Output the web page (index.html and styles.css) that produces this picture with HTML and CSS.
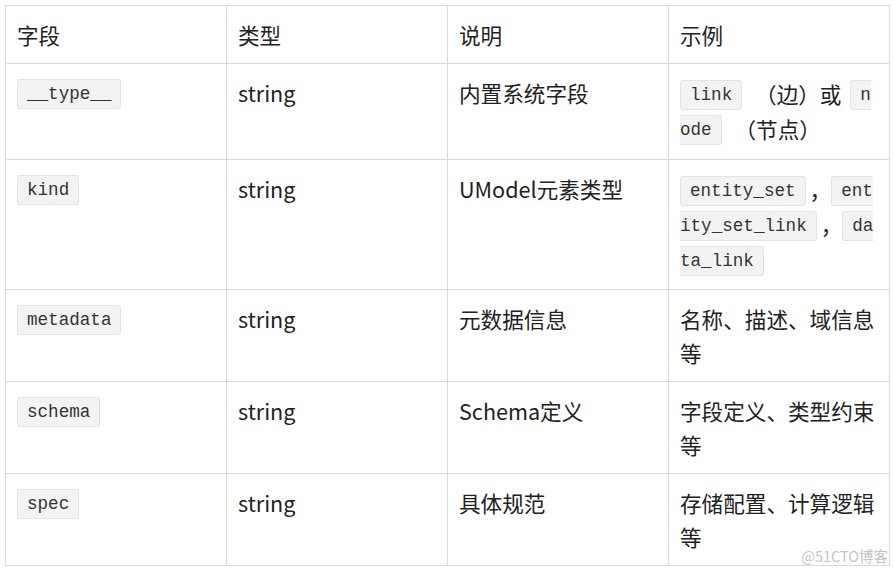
FILE: index.html
```html
<!DOCTYPE html>
<html lang="zh-CN">
<head>
<meta charset="utf-8">
<link rel="stylesheet" href="styles.css">
</head>
<body>
<div class="wrap">
<table class="tbl">
  <thead>
    <tr><th>字段</th><th>类型</th><th>说明</th><th>示例</th></tr>
  </thead>
  <tbody>
    <tr>
      <td><code>__type__</code></td>
      <td>string</td>
      <td>内置系统字段</td>
      <td class="codes"><code>link</code> （边）或 <code>node</code> （节点）</td>
    </tr>
    <tr>
      <td><code>kind</code></td>
      <td>string</td>
      <td>UModel元素类型</td>
      <td class="codes"><code>entity_set</code>，<code>entity_set_link</code>，<code>data_link</code></td>
    </tr>
    <tr>
      <td><code>metadata</code></td>
      <td>string</td>
      <td>元数据信息</td>
      <td>名称、描述、域信息等</td>
    </tr>
    <tr>
      <td><code>schema</code></td>
      <td>string</td>
      <td>Schema定义</td>
      <td>字段定义、类型约束等</td>
    </tr>
    <tr>
      <td><code>spec</code></td>
      <td>string</td>
      <td>具体规范</td>
      <td>存储配置、计算逻辑等</td>
    </tr>
  </tbody>
</table>
<div class="watermark">@51CTO博客</div>
</div>
</body>
</html>
```

FILE: styles.css
```css
html, body {
  margin: 0;
  padding: 0;
  background: #ffffff;
}
body {
  font-family: "Noto Sans CJK SC", "Noto Sans", sans-serif;
  color: #222222;
}
.wrap {
  position: relative;
  width: 894px;
  height: 573px;
  padding: 5px 0 0 5px;
  box-sizing: border-box;
}
.tbl {
  border-collapse: collapse;
  table-layout: fixed;
  width: 885px;
}
.tbl th,
.tbl td {
  border: 1px solid #dadada;
  padding: 12px 11px;
  text-align: left;
  vertical-align: top;
  font-size: 21.6px;
  font-weight: normal;
  line-height: 33.5px;
  word-spacing: 4px;
  word-wrap: break-word;
}
.tbl th {
  line-height: 33px;
}
.tbl td.codes {
  line-height: 35.3px;
}
.tbl code {
  font-family: "Liberation Mono", "Noto Sans CJK SC", monospace;
  font-size: 17.6px;
  line-height: 1;
  color: #333333;
  background: #f3f3f3;
  border: 1px solid #e4e4e4;
  border-radius: 3px;
  padding: 4px 9px;
  margin-right: 4px;
  vertical-align: 3px;
  word-spacing: 0;
  word-break: break-all;
}
.watermark {
  position: absolute;
  right: 6px;
  bottom: 8px;
  font-family: "Noto Sans CJK SC", sans-serif;
  font-size: 14.5px;
  line-height: 18px;
  color: #c4c4c4;
}
```
